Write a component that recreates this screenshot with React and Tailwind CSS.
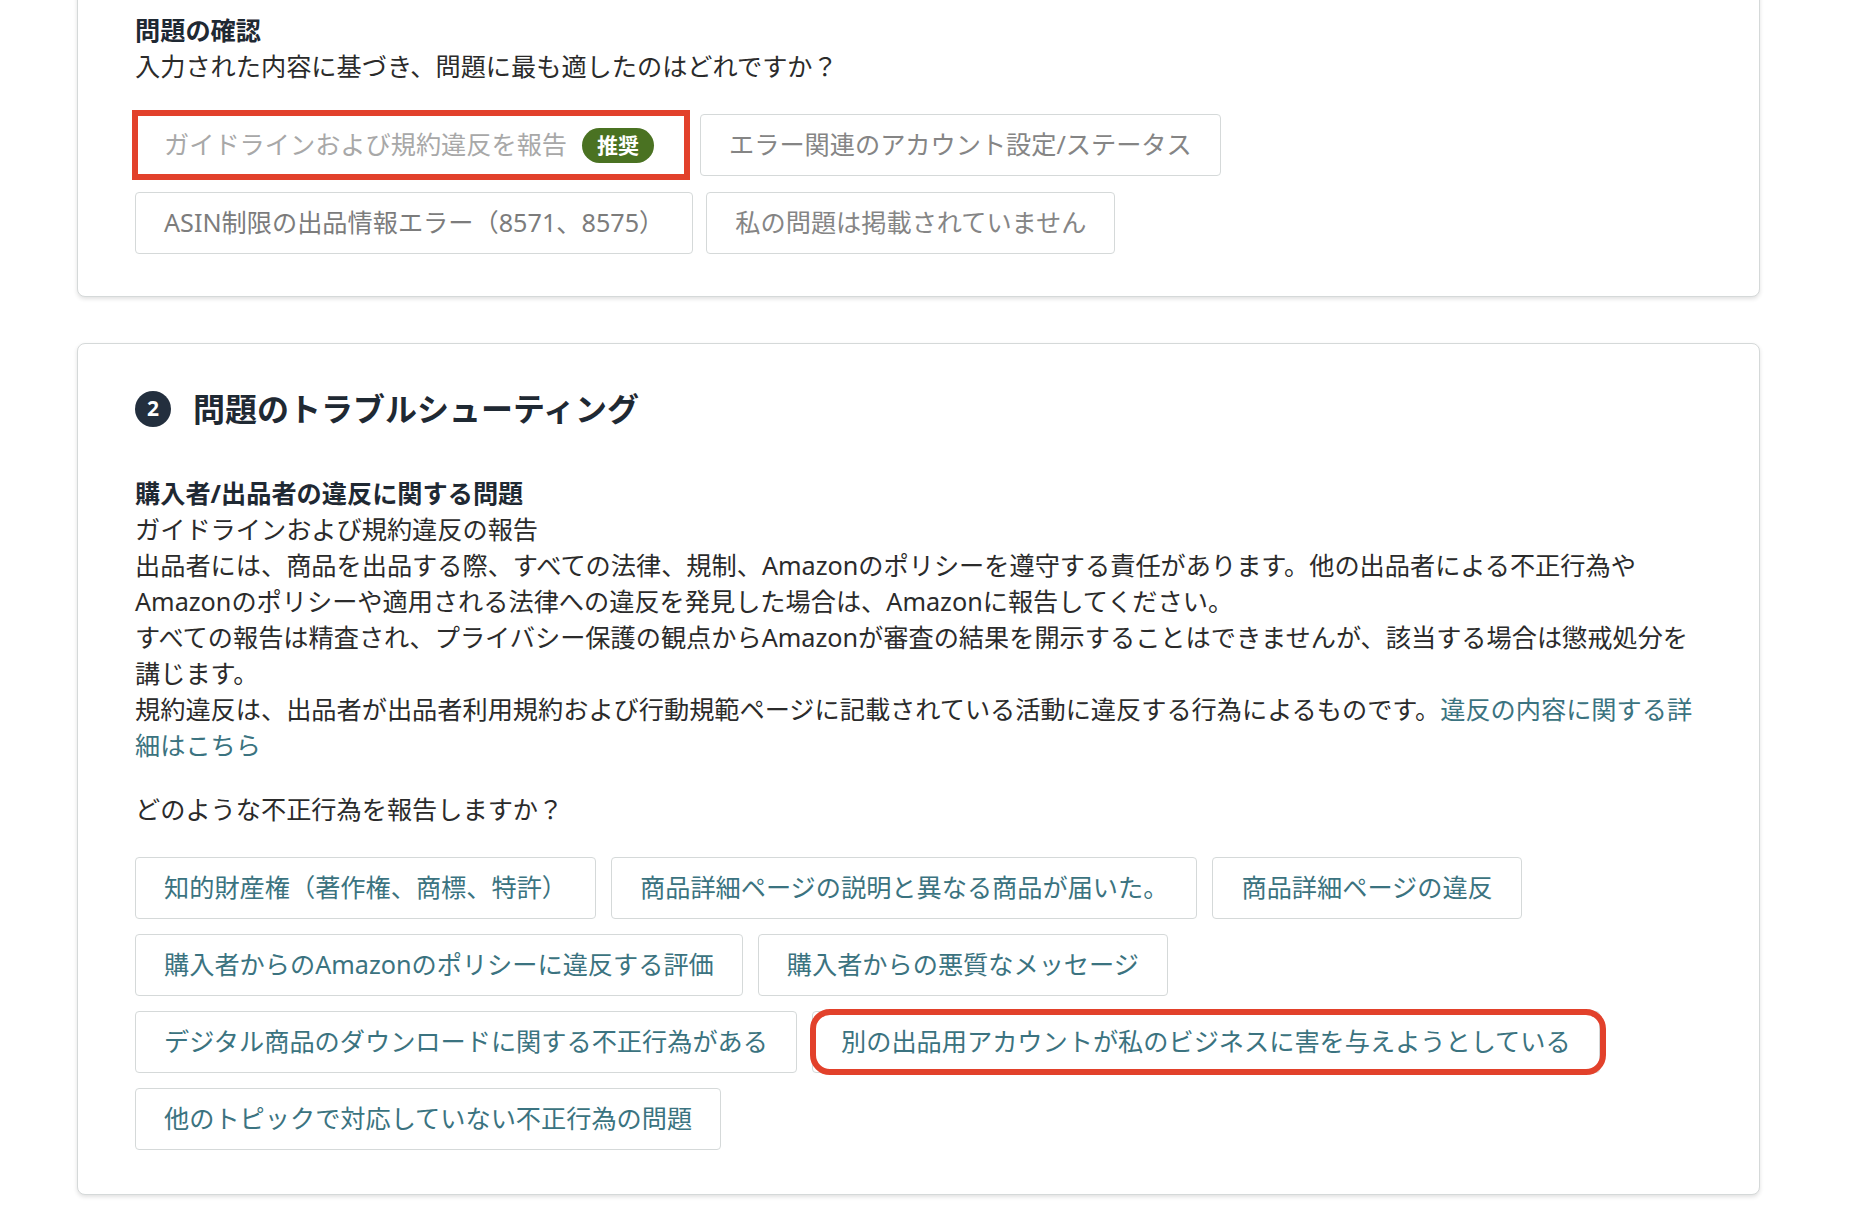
const buttonBase =
  'relative inline-flex items-center h-[62px] px-[28px] bg-white border border-[#d5d9d9] rounded-[4px] text-[25.2px] leading-none whitespace-nowrap';

const reportTypes = [
  '知的財産権（著作権、商標、特許）',
  '商品詳細ページの説明と異なる商品が届いた。',
  '商品詳細ページの違反',
  '購入者からのAmazonのポリシーに違反する評価',
  '購入者からの悪質なメッセージ',
  'デジタル商品のダウンロードに関する不正行為がある',
  '別の出品用アカウントが私のビジネスに害を与えようとしている',
  '他のトピックで対応していない不正行為の問題',
];

function RedBox({ rounded }) {
  // annotation drawn over the button
  return rounded ? (
    <span className="pointer-events-none absolute -left-[3px] -right-[7px] -top-[3px] -bottom-[3px] border-[6px] border-[#e2412b] rounded-[20px]" />
  ) : (
    <span className="pointer-events-none absolute -left-[4px] -right-[4px] -top-[5px] -bottom-[5px] border-[6px] border-[#e2412b]" />
  );
}

export default function App() {
  return (
    <div
      className="min-h-screen bg-white text-[#2b2b2b] overflow-hidden"
      style={{ fontFamily: '"Noto Sans", "Noto Sans CJK JP", sans-serif' }}
    >
      <div className="ml-[77px] w-[1683px] flex flex-col gap-[46px]">
        {/* Step 1: confirm the issue */}
        <section className="-mt-[30px] bg-white border border-[#d5d9d9] rounded-[8px] shadow-[0_2px_4px_rgba(0,0,0,0.12)] px-[57px] pt-[41px] pb-[42px]">
          <h3 className="text-[25.2px] leading-[36px] font-bold text-[#1f2933]">問題の確認</h3>
          <p className="text-[25.2px] leading-[36px]">入力された内容に基づき、問題に最も適したのはどれですか？</p>
          <div className="mt-[30px] flex flex-wrap gap-x-[13px] gap-y-[16px]">
            <button className={`${buttonBase} pr-[32px] text-[#a8a8a8]`}>
              ガイドラインおよび規約違反を報告
              <span className="ml-[15px] inline-flex items-center h-[35px] px-[15px] rounded-full bg-[#4a7222] text-white font-bold text-[21px]">
                推奨
              </span>
              <RedBox />
            </button>
            <button className={`${buttonBase} text-[#858585]`}>エラー関連のアカウント設定/ステータス</button>
            <button className={`${buttonBase} text-[#7c7c7c]`}>ASIN制限の出品情報エラー（8571、8575）</button>
            <button className={`${buttonBase} text-[#858585]`}>私の問題は掲載されていません</button>
          </div>
        </section>

        {/* Step 2: troubleshooting */}
        <section className="bg-white border border-[#d5d9d9] rounded-[8px] shadow-[0_2px_4px_rgba(0,0,0,0.12)] px-[57px] pt-[45px] pb-[44px]">
          <div className="flex items-center h-[40px] gap-[22px]">
            <span className="flex items-center justify-center w-[36px] h-[36px] rounded-full bg-[#232f3e] text-white text-[21px] font-bold">
              2
            </span>
            <h2 className="text-[32px] leading-[40px] font-bold text-[#1f2933]">問題のトラブルシューティング</h2>
          </div>

          <div className="mt-[46px] text-[25.2px] leading-[36px]">
            <p className="font-bold text-[#1f2933]">購入者/出品者の違反に関する問題</p>
            <p>ガイドラインおよび規約違反の報告</p>
            <p>
              出品者には、商品を出品する際、すべての法律、規制、Amazonのポリシーを遵守する責任があります。他の出品者による不正行為やAmazonのポリシーや適用される法律への違反を発見した場合は、Amazonに報告してください。
            </p>
            <p>
              すべての報告は精査され、プライバシー保護の観点からAmazonが審査の結果を開示することはできませんが、該当する場合は懲戒処分を講じます。
            </p>
            <p>
              規約違反は、出品者が出品者利用規約および行動規範ページに記載されている活動に違反する行為によるものです。
              <a href="#" className="text-[#3b7380]">違反の内容に関する詳細はこちら</a>
            </p>
          </div>

          <p className="mt-[28px] text-[25.2px] leading-[36px]">どのような不正行為を報告しますか？</p>

          <div className="mt-[30px] flex flex-wrap gap-x-[15px] gap-y-[15px]">
            {reportTypes.map((t, i) => (
              <button key={i} className={`${buttonBase} text-[#3b7380]`}>
                {t}
                {i === 6 && <RedBox rounded />}
              </button>
            ))}
          </div>
        </section>
      </div>
    </div>
  );
}
